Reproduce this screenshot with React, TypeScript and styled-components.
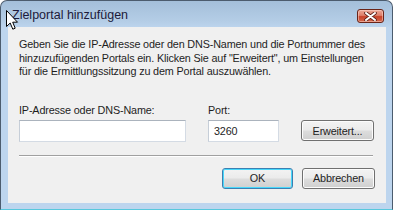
import React from 'react';
import styled, { createGlobalStyle } from 'styled-components';

const GlobalStyle = createGlobalStyle`
  html, body {
    margin: 0;
    padding: 0;
    background: #ffffff;
  }
  body {
    font-family: "Liberation Sans", Arial, sans-serif;
    font-size: 10.8px;
    letter-spacing: -0.15px;
    color: #1e1e1e;
  }
`;

const Page = styled.div`
  position: relative;
  width: 394px;
  height: 213px;
  overflow: hidden;
`;

const Window = styled.div`
  width: 393px;
  height: 210px;
  box-sizing: border-box;
  border: 1px solid #4c5c6e;
  border-bottom: 1px solid #58c8dc;
  border-radius: 7px 7px 0 0;
  background: linear-gradient(to bottom, #a4bfda 0px, #b4cde6 20px, #bdd5ee 27px, #bdd5ee 100%);
  display: flex;
  flex-direction: column;
  padding: 0 6px 6px 7px;
`;

const TitleBar = styled.div`
  height: 26px;
  display: flex;
  align-items: center;
  justify-content: space-between;
  padding: 0 2px 0 4px;
`;

const TitleText = styled.span`
  font-size: 12.5px;
  letter-spacing: 0;
  color: #1c1a3a;
  padding-top: 2px;
`;

const CloseButton = styled.div`
  width: 27px;
  height: 14px;
  box-sizing: border-box;
  margin-top: 4px;
  border: 1px solid #6a2418;
  border-radius: 3px;
  background: linear-gradient(to bottom, #eba797 0%, #de7f6a 45%, #c8422a 55%, #d4684c 100%);
  display: flex;
  align-items: center;
  justify-content: center;
  box-shadow: inset 0 0 0 1px rgba(255, 220, 210, 0.5);
`;

const Client = styled.div`
  flex: 1;
  background: #f0f0f0;
  padding: 11px 11px 0 11px;
  display: flex;
  flex-direction: column;
`;

const Description = styled.p`
  margin: 0;
  line-height: 13.5px;
  white-space: nowrap;
  color: #1e1e1e;
`;

const FormRow = styled.div`
  margin-top: 24px;
  display: grid;
  grid-template-columns: 167px 71px 73px;
  column-gap: 22px;
  grid-template-rows: 14px 22px;
  row-gap: 3px;
  align-items: center;
`;

const Label = styled.label`
  color: #1e1e1e;
  line-height: 14px;
`;

const TextBox = styled.input<{ $w: number }>`
  width: ${(p) => p.$w}px;
  height: 22px;
  box-sizing: border-box;
  border: 1px solid #d4dbe4;
  border-top-color: #abb3bd;
  border-left-color: #c6ced8;
  background: #ffffff;
  font-family: "Liberation Sans", Arial, sans-serif;
  font-size: 10.8px;
  letter-spacing: -0.15px;
  color: #1e1e1e;
  padding: 0 5px;
  outline: none;
`;

const Button = styled.button<{ $default?: boolean; $w: number }>`
  width: ${(p) => p.$w}px;
  height: 21px;
  box-sizing: border-box;
  border: 1px solid ${(p) => (p.$default ? '#3c7fb1' : '#707070')};
  border-radius: 3px;
  background: linear-gradient(to bottom, #f3f3f3 0%, #ebebeb 48%, #dddddd 52%, #cfcfcf 100%);
  box-shadow: ${(p) => (p.$default ? 'inset 0 0 0 1px #48d8fb' : 'inset 0 0 0 1px #fcfcfc')};
  font-family: "Liberation Sans", Arial, sans-serif;
  font-size: 10.8px;
  letter-spacing: -0.15px;
  color: #1e1e1e;
  padding: 0;
`;

const Separator = styled.div`
  margin-top: 13px;
  width: 354px;
  height: 1px;
  background: #a0a0a0;
  border-bottom: 1px solid #ffffff;
`;

const ButtonBar = styled.div`
  margin-top: 11px;
  display: flex;
  justify-content: flex-end;
  gap: 9px;
`;

const Cursor = styled.svg`
  position: absolute;
  left: 6px;
  top: 10px;
`;

export default function App() {
  return (
    <>
      <GlobalStyle />
      <Page>
        <Window>
          <TitleBar>
            <TitleText>Zielportal hinzufügen</TitleText>
            <CloseButton>
              <svg width="13" height="9" viewBox="0 0 13 9">
                <path
                  d="M2 1 L11 8 M11 1 L2 8"
                  stroke="#5a2018"
                  strokeWidth="3.6"
                  strokeLinecap="round"
                />
                <path
                  d="M2 1 L11 8 M11 1 L2 8"
                  stroke="#ffffff"
                  strokeWidth="2"
                  strokeLinecap="round"
                />
              </svg>
            </CloseButton>
          </TitleBar>
          <Client>
            <Description>
              Geben Sie die IP-Adresse oder den DNS-Namen und die Portnummer des
              <br />
              hinzuzufügenden Portals ein. Klicken Sie auf "Erweitert", um Einstellungen
              <br />
              für die Ermittlungssitzung zu dem Portal auszuwählen.
            </Description>
            <FormRow>
              <Label>IP-Adresse oder DNS-Name:</Label>
              <Label>Port:</Label>
              <span />
              <TextBox $w={167} defaultValue="" />
              <TextBox $w={71} defaultValue="3260" />
              <Button $w={73}>Erweitert...</Button>
            </FormRow>
            <Separator />
            <ButtonBar>
              <Button $w={71} $default>
                OK
              </Button>
              <Button $w={73}>Abbrechen</Button>
            </ButtonBar>
          </Client>
        </Window>
        <Cursor width="13" height="21" viewBox="0 0 13 21">
          <path
            d="M0.5 0.5 L0.5 16.5 L4.2 13 L6.8 19.2 L9.2 18.2 L6.7 12.2 L11.5 12.2 Z"
            fill="#ffffff"
            stroke="#000000"
            strokeWidth="1"
            strokeLinejoin="miter"
          />
        </Cursor>
      </Page>
    </>
  );
}
